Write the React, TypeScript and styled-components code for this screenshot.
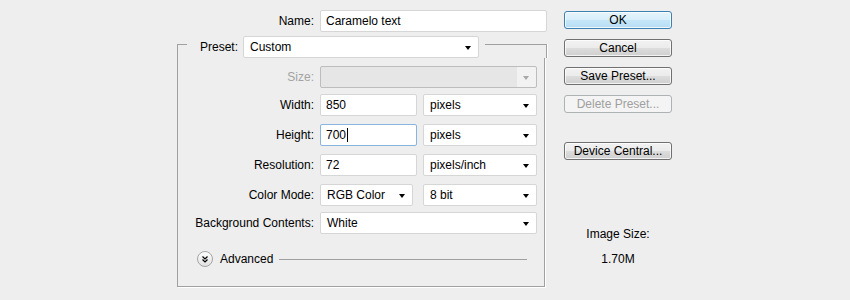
import React from "react";
import styled, { createGlobalStyle } from "styled-components";

const GlobalStyle = createGlobalStyle`
  html, body {
    margin: 0;
    padding: 0;
    background: #eeeeee;
  }
  body {
    font-family: "Liberation Sans", Arial, sans-serif;
    font-size: 12px;
    color: #000;
  }
`;

const LINE = "#a0a0a0";

const Dialog = styled.div`
  width: 850px;
  height: 300px;
  box-sizing: border-box;
  padding: 10px 0 0 177px;
  display: flex;
  gap: 17px;
`;

const LeftColumn = styled.div`
  width: 370px;
  display: flex;
  flex-direction: column;
`;

const NameRow = styled.div`
  display: flex;
  align-items: center;
  gap: 6px;
`;

const Label = styled.div<{ $width?: number; $disabled?: boolean }>`
  width: ${(p) => p.$width ?? 136}px;
  flex: none;
  text-align: right;
  white-space: nowrap;
  color: ${(p) => (p.$disabled ? "#a3a3a3" : "#000")};
`;

const Field = styled.div<{ $width?: number; $focused?: boolean }>`
  box-sizing: border-box;
  height: 22px;
  width: ${(p) => (p.$width ? `${p.$width}px` : "auto")};
  flex: ${(p) => (p.$width ? "none" : "1")};
  background: #fff;
  border: 1px solid ${(p) => (p.$focused ? "#8ab4e0" : "#d6d6d6")};
  border-radius: 2px;
  padding: 0 5px;
  display: flex;
  align-items: center;
  white-space: nowrap;
`;

const Caret = styled.span`
  display: inline-block;
  width: 1px;
  height: 14px;
  background: #000;
  margin-left: 1px;
`;

const SelectBox = styled.div<{ $width?: number; $disabled?: boolean }>`
  box-sizing: border-box;
  height: 22px;
  width: ${(p) => (p.$width ? `${p.$width}px` : "auto")};
  flex: ${(p) => (p.$width ? "none" : "1")};
  background: ${(p) =>
    p.$disabled
      ? "linear-gradient(to right, #e6e6e6 calc(100% - 19px), #f2f2f2 calc(100% - 19px))"
      : "#fff"};
  border: 1px solid ${(p) => (p.$disabled ? "#bdbdbd" : "#d6d6d6")};
  border-radius: 2px;
  padding: 0 7px 0 6px;
  display: flex;
  align-items: center;
  justify-content: space-between;
  white-space: nowrap;
`;

const Arrow = styled.span<{ $disabled?: boolean }>`
  width: 0;
  height: 0;
  border-left: 3.5px solid transparent;
  border-right: 3.5px solid transparent;
  border-top: 4px solid ${(p) => (p.$disabled ? "#a8a8a8" : "#000")};
  margin-top: 1px;
`;

const Select = ({
  value,
  width,
  disabled,
}: {
  value?: string;
  width?: number;
  disabled?: boolean;
}) => (
  <SelectBox $width={width} $disabled={disabled}>
    <span>{value}</span>
    <Arrow $disabled={disabled} />
  </SelectBox>
);

const FrameHeader = styled.div`
  display: flex;
  align-items: stretch;
  height: 22px;
  margin-top: 4px;
`;

const Corner = styled.div`
  width: 9px;
  margin-top: 8px;
  border-left: 1px solid ${LINE};
  border-top: 1px solid ${LINE};
`;

const PresetLabel = styled.div`
  padding: 0 5px 0 13px;
  display: flex;
  align-items: center;
`;

const HeaderLine = styled.div`
  flex: 1;
  margin: 8px 0 0 6px;
  border-top: 1px solid ${LINE};
  border-right: 1px solid ${LINE};
  box-shadow: 1px 0 0 #fff;
`;

const FrameBody = styled.div`
  width: 368px;
  box-sizing: border-box;
  border: 1px solid ${LINE};
  border-top: none;
  box-shadow: 1px 1px 0 #fff;
  padding: 8px 7px 19px 0;
  display: flex;
  flex-direction: column;
`;

const Row = styled.div<{ $gap?: number }>`
  display: flex;
  align-items: center;
  gap: 6px;
  margin-top: ${(p) => p.$gap ?? 8}px;

  &:first-child {
    margin-top: 0;
  }
`;

const Pair = styled.div<{ $gap?: number }>`
  flex: 1;
  display: flex;
  gap: ${(p) => p.$gap ?? 6}px;
`;

const AdvancedRow = styled.div`
  display: flex;
  align-items: center;
  height: 16px;
  margin-top: 17px;
  padding: 0 10px 0 19px;
`;

const AdvancedText = styled.span`
  margin: 0 6px 0 7px;
`;

const Rule = styled.div`
  flex: 1;
  height: 1px;
  background: ${LINE};
`;

const RightColumn = styled.div`
  width: 108px;
  display: flex;
  flex-direction: column;
  padding-top: 1px;
`;

const Button = styled.button<{ $default?: boolean; $gap?: number }>`
  box-sizing: border-box;
  width: 108px;
  height: 18px;
  padding: 0;
  margin: ${(p) => p.$gap ?? 0}px 0 0;
  font: inherit;
  color: #000;
  border-radius: 3px;
  border: 1px solid ${(p) => (p.$default ? "#3c7fb1" : "#707070")};
  background: ${(p) =>
    p.$default
      ? "linear-gradient(#e6f4fc, #d6eefb 50%, #c6e6f8 50%, #b6ddf4)"
      : "linear-gradient(#f2f2f2, #ebebeb 50%, #dddddd 50%, #cfcfcf)"};
  box-shadow: inset 0 0 0 1px rgba(255, 255, 255, 0.75);
  line-height: 15px;

  &:disabled {
    color: #a0a0a0;
    border-color: #adb2b5;
    background: #f4f4f4;
    box-shadow: none;
  }
`;

const SizeInfo = styled.div`
  margin-top: 67px;
  display: flex;
  flex-direction: column;
  align-items: center;
  gap: 11px;
  line-height: 14px;
`;

const AdvancedIcon = () => (
  <svg width="16" height="16" viewBox="0 0 16 16">
    <defs>
      <linearGradient id="adv" x1="0" y1="0" x2="0" y2="1">
        <stop offset="0" stopColor="#ffffff" />
        <stop offset="1" stopColor="#e0e0e0" />
      </linearGradient>
    </defs>
    <circle cx="8" cy="8" r="7.5" fill="url(#adv)" stroke="#a4a4a4" />
    <path
      d="M5.5 5.5 L8 8 L10.5 5.5 M5.5 8.5 L8 11 L10.5 8.5"
      fill="none"
      stroke="#000"
      strokeWidth="1.2"
    />
  </svg>
);

export default function App() {
  return (
    <>
      <GlobalStyle />
      <Dialog>
        <LeftColumn>
          <NameRow>
            <Label $width={137}>Name:</Label>
            <Field $width={227}>Caramelo text</Field>
          </NameRow>

          <FrameHeader>
            <Corner />
            <PresetLabel>Preset:</PresetLabel>
            <Select value="Custom" width={236} />
            <HeaderLine />
          </FrameHeader>

          <FrameBody>
            <Row>
              <Label $disabled>Size:</Label>
              <Select disabled />
            </Row>
            <Row $gap={6}>
              <Label>Width:</Label>
              <Pair>
                <Field $width={97}>850</Field>
                <Select value="pixels" />
              </Pair>
            </Row>
            <Row>
              <Label>Height:</Label>
              <Pair>
                <Field $width={97} $focused>
                  700
                  <Caret />
                </Field>
                <Select value="pixels" />
              </Pair>
            </Row>
            <Row>
              <Label>Resolution:</Label>
              <Pair>
                <Field $width={97}>72</Field>
                <Select value="pixels/inch" />
              </Pair>
            </Row>
            <Row>
              <Label>Color Mode:</Label>
              <Pair $gap={10}>
                <Select value="RGB Color" width={93} />
                <Select value="8 bit" />
              </Pair>
            </Row>
            <Row $gap={6}>
              <Label>Background Contents:</Label>
              <Select value="White" />
            </Row>
            <AdvancedRow>
              <AdvancedIcon />
              <AdvancedText>Advanced</AdvancedText>
              <Rule />
            </AdvancedRow>
          </FrameBody>
        </LeftColumn>

        <RightColumn>
          <Button $default>OK</Button>
          <Button $gap={10}>Cancel</Button>
          <Button $gap={10}>Save Preset...</Button>
          <Button $gap={10} disabled>
            Delete Preset...
          </Button>
          <Button $gap={29}>Device Central...</Button>
          <SizeInfo>
            <span>Image Size:</span>
            <span>1.70M</span>
          </SizeInfo>
        </RightColumn>
      </Dialog>
    </>
  );
}
